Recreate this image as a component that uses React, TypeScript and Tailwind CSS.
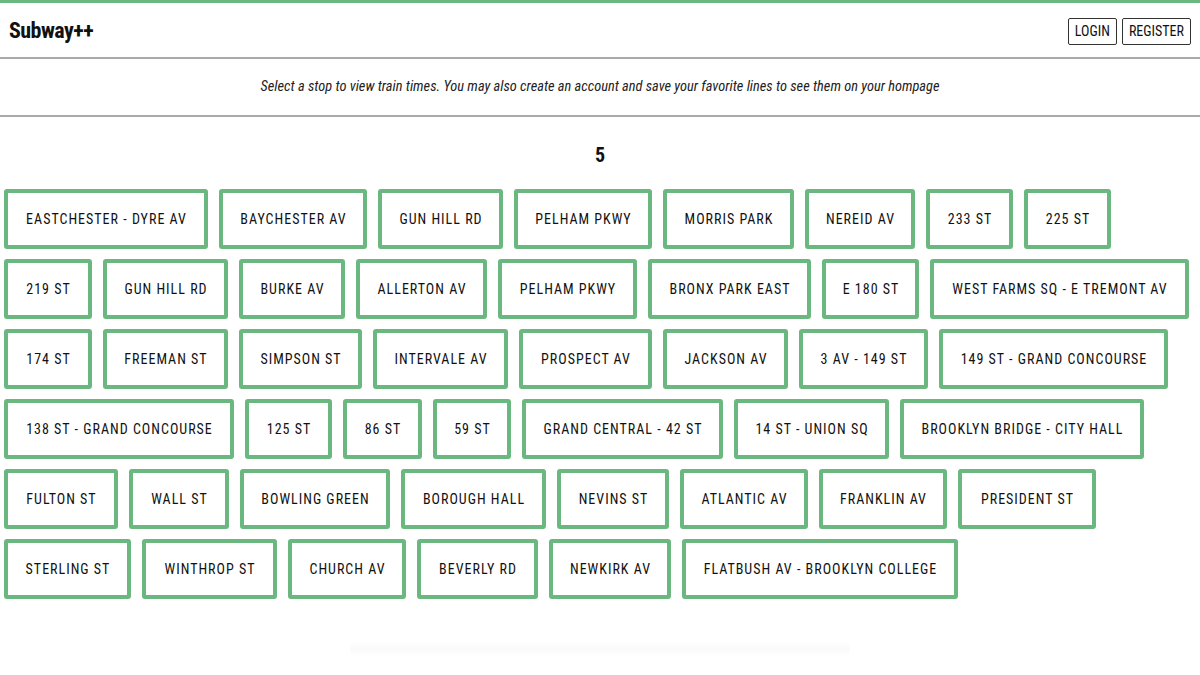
import React from "react";

// stop name + box width taken from the reference layout
const stops: { name: string; w: string }[] = [
  { name: "EASTCHESTER - DYRE AV", w: "w-[204px]" },
  { name: "BAYCHESTER AV", w: "w-[148px]" },
  { name: "GUN HILL RD", w: "w-[125px]" },
  { name: "PELHAM PKWY", w: "w-[138px]" },
  { name: "MORRIS PARK", w: "w-[131px]" },
  { name: "NEREID AV", w: "w-[110px]" },
  { name: "233 ST", w: "w-[87px]" },
  { name: "225 ST", w: "w-[87px]" },
  { name: "219 ST", w: "w-[88px]" },
  { name: "GUN HILL RD", w: "w-[125px]" },
  { name: "BURKE AV", w: "w-[106px]" },
  { name: "ALLERTON AV", w: "w-[131px]" },
  { name: "PELHAM PKWY", w: "w-[139px]" },
  { name: "BRONX PARK EAST", w: "w-[163px]" },
  { name: "E 180 ST", w: "w-[97px]" },
  { name: "WEST FARMS SQ - E TREMONT AV", w: "w-[259px]" },
  { name: "174 ST", w: "w-[88px]" },
  { name: "FREEMAN ST", w: "w-[125px]" },
  { name: "SIMPSON ST", w: "w-[123px]" },
  { name: "INTERVALE AV", w: "w-[135px]" },
  { name: "PROSPECT AV", w: "w-[133px]" },
  { name: "JACKSON AV", w: "w-[125px]" },
  { name: "3 AV - 149 ST", w: "w-[129px]" },
  { name: "149 ST - GRAND CONCOURSE", w: "w-[229px]" },
  { name: "138 ST - GRAND CONCOURSE", w: "w-[230px]" },
  { name: "125 ST", w: "w-[87px]" },
  { name: "86 ST", w: "w-[79px]" },
  { name: "59 ST", w: "w-[78px]" },
  { name: "GRAND CENTRAL - 42 ST", w: "w-[201px]" },
  { name: "14 ST - UNION SQ", w: "w-[155px]" },
  { name: "BROOKLYN BRIDGE - CITY HALL", w: "w-[244px]" },
  { name: "FULTON ST", w: "w-[114px]" },
  { name: "WALL ST", w: "w-[100px]" },
  { name: "BOWLING GREEN", w: "w-[150px]" },
  { name: "BOROUGH HALL", w: "w-[145px]" },
  { name: "NEVINS ST", w: "w-[112px]" },
  { name: "ATLANTIC AV", w: "w-[128px]" },
  { name: "FRANKLIN AV", w: "w-[128px]" },
  { name: "PRESIDENT ST", w: "w-[138px]" },
  { name: "STERLING ST", w: "w-[127px]" },
  { name: "WINTHROP ST", w: "w-[135px]" },
  { name: "CHURCH AV", w: "w-[118px]" },
  { name: "BEVERLY RD", w: "w-[121px]" },
  { name: "NEWKIRK AV", w: "w-[122px]" },
  { name: "FLATBUSH AV - BROOKLYN COLLEGE", w: "w-[276px]" },
];

export default function App() {
  return (
    <div className="min-h-[675px] bg-white text-[#111] font-['Roboto_Condensed','Liberation_Sans_Narrow',Roboto,sans-serif] [font-stretch:condensed]">
      <div className="h-[3px] bg-[#6ab77f]" />

      {/* Header */}
      <header className="flex h-[56px] items-center justify-between border-b-2 border-[#aaaaaa] px-[9px]">
        <h1 className="text-[22px] font-bold tracking-tight">Subway++</h1>
        <div className="flex gap-[5px] pt-[2px]">
          <button className="h-[27px] rounded-[2px] border border-[#333] px-[6px] text-[14px] font-[450] leading-none">
            LOGIN
          </button>
          <button className="h-[27px] rounded-[2px] border border-[#333] px-[6px] text-[14px] font-[450] leading-none">
            REGISTER
          </button>
        </div>
      </header>

      <div className="flex h-[58px] items-center justify-center border-b-2 border-[#aaaaaa]">
        <p className="text-[14.4px] italic text-[#222]">
          Select a stop to view train times. You may also create an account and save your favorite lines to see them on your hompage
        </p>
      </div>

      <h2 className="mt-[24px] text-center text-[20px] font-bold leading-[28px]">5</h2>

      <div className="mt-[20px] flex flex-wrap gap-x-[11px] gap-y-[10px] px-[4px]">
        {stops.map((s, i) => (
          <button
            key={i}
            className={`${s.w} h-[60px] shrink-0 rounded-[3px] border-4 border-[#6ab77f] bg-white pl-[1px] text-center text-[14px] font-[450] tracking-[1px] leading-none whitespace-nowrap`}
          >
            {s.name}
          </button>
        ))}
      </div>

      {/* faint footer shadow */}
      <div className="mx-auto mt-[42px] h-[16px] w-[500px] rounded-full bg-gradient-to-b from-transparent via-[#fafafa] to-transparent" />
    </div>
  );
}
